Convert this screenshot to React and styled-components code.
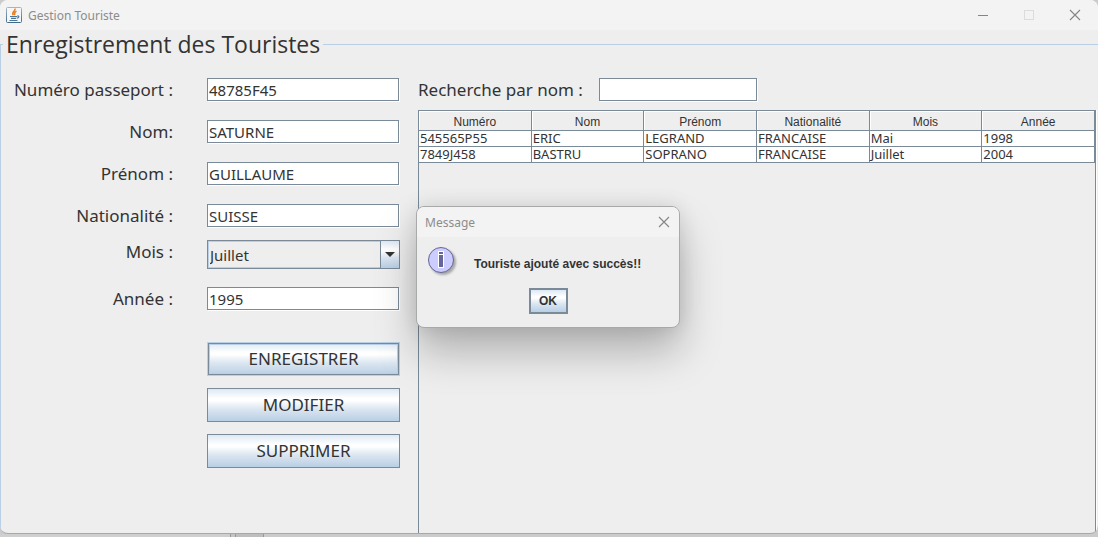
import React from "react";
import styled, { createGlobalStyle } from "styled-components";

const ui = '"Noto Sans", "Open Sans", sans-serif';
const metal = "linear-gradient(#dde8f3 0%, #ffffff 30%, #ffffff 36%, #dce6f1 62%, #b8cfe5 100%)";

const GlobalStyle = createGlobalStyle`
  * { box-sizing: border-box; }
  body { margin: 0; background: #cbcbcb; color: #333; font-family: ${ui}; }
  button, input, select { margin: 0; color: #333; font-family: inherit; border-radius: 0; }
`;

const Desktop = styled.div`
  position: relative;
  display: flex;
  flex-direction: column;
  min-height: 100vh;
`;

const Window = styled.main`
  flex: 1;
  display: flex;
  flex-direction: column;
  background: #eee;
  border-bottom: 1px solid #a6a8aa;
  border-radius: 8px;
  overflow: hidden;
`;

const TitleBar = styled.header`
  display: flex;
  align-items: center;
  height: 30px;
  padding-left: 6px;
  background: #f3f3f3;
  color: #8c8c8c;
  font-size: 12px;
`;

const Title = styled.span`
  flex: 1;
  padding-left: 6px;
`;

const CaptionButton = styled.button`
  display: flex;
  align-items: center;
  justify-content: center;
  width: ${(p) => p.$width || 46}px;
  height: 28px;
  padding: 0;
  border: 0;
  background: none;
`;

const Panel = styled.fieldset`
  flex: 1;
  min-width: 0;
  margin: 0;
  padding: 20px 2px 0 6px;
  border: 1px solid #b8cfe5;
  border-width: 1px 0 0 1px;
`;

const Legend = styled.legend`
  margin-left: -4px;
  padding: 0 3px;
  font-family: "Open Sans", "Noto Sans", sans-serif;
  font-size: 23px;
  line-height: 28px;
`;

const Columns = styled.div`
  display: flex;
  align-items: stretch;
  gap: 18px;
  min-height: calc(100vh - 82px);
`;

const Form = styled.form`
  display: flex;
  flex-direction: column;
  flex: none;
  width: 393px;
  gap: 18px;
`;

const Field = styled.div`
  display: grid;
  grid-template-columns: 166px 193px;
  column-gap: 34px;
  align-items: start;
`;

const Group = styled.div`
  display: flex;
  flex-direction: column;
  gap: 12px;
`;

const Label = styled.label`
  font-size: 17px;
  line-height: 24px;
  text-align: right;
  white-space: nowrap;
`;

const TextBox = styled.input`
  width: ${(p) => p.$width || "192px"};
  height: 23px;
  margin-bottom: 1px;
  padding: 0 1px;
  border: 1px solid #7a8a99;
  background: #fff;
  box-shadow: 1px 1px 0 #fff;
  font-size: 15px;
  outline: 0;
`;

const SelectFrame = styled.div`
  display: grid;
  grid-template-columns: 1fr 19px;
  height: 29px;
  border: 1px solid #7a8a99;
`;

const Select = styled.select`
  grid-area: 1 / 1 / 2 / 3;
  appearance: none;
  padding: 0 1px;
  border: 1px solid #b8cfe5;
  background: #eee;
  font-size: 15px;
  outline: 0;
`;

const SelectArrow = styled.span`
  grid-area: 1 / 2;
  display: flex;
  align-items: center;
  justify-content: center;
  border-left: 1px solid #7a8a99;
  background: ${metal};
  pointer-events: none;
`;

const Actions = styled.div`
  display: flex;
  flex-direction: column;
  gap: 12px;
  width: 193px;
  margin: 13px 0 0 200px;
`;

const ActionButton = styled.button`
  height: 34px;
  padding: 0;
  border: 1px solid ${(p) => (p.$focused ? "#b8cfe5" : "#7a8a99")};
  background: ${metal};
  box-shadow: ${(p) => (p.$focused ? "inset 0 0 0 1px #7a8a99, inset 0 0 0 2px #b8cfe5" : "none")};
  font-size: 17px;
  line-height: 24px;
`;

const Results = styled.section`
  flex: 1;
  display: flex;
  flex-direction: column;
  min-width: 0;
  gap: 8px;
`;

const Search = styled.div`
  display: flex;
  align-items: center;
  gap: 16px;
`;

const ScrollPane = styled.div`
  flex: 1;
  border: 1px solid #7a8a99;
  border-bottom: 0;
  box-shadow: 1px 0 0 #fff;
`;

const Table = styled.table`
  width: 100%;
  table-layout: fixed;
  border-collapse: separate;
  border-spacing: 0;
`;

const HeadCell = styled.th`
  height: 20px;
  padding: 2px 0 0;
  border-right: 1px solid #7a8a99;
  border-bottom: 1px solid #7a8a99;
  box-shadow: inset 1px 1px 0 #fff;
  font: 12px/16px "Liberation Sans", Arial, sans-serif;
`;

const Cell = styled.td`
  height: 16px;
  padding: 0 1px;
  border-right: 1px solid #7a8a99;
  border-bottom: 1px solid #7a8a99;
  background: #fff;
  font-size: 13px;
  line-height: 15px;
`;

const Overlay = styled.div`
  position: absolute;
  inset: 0 2px 3px 0;
  display: flex;
  align-items: center;
  justify-content: center;
`;

const Dialog = styled.div`
  width: 264px;
  border: 1px solid #a8aaaa;
  border-radius: 8px;
  background: #eee;
  box-shadow: 0 24px 42px rgba(0, 0, 0, 0.26), 0 0 20px rgba(0, 0, 0, 0.1);
  overflow: hidden;
`;

const DialogTitle = styled.div`
  display: flex;
  align-items: center;
  justify-content: space-between;
  height: 30px;
  padding-left: 8px;
  background: #f3f3f3;
  color: #8c8c8c;
  font-size: 12px;
`;

const DialogBody = styled.div`
  display: flex;
  gap: 15px;
  padding: 9px 10px 0;
`;

const DialogText = styled.p`
  margin: 0;
  padding-top: 10px;
  font: bold 12px/16px "Liberation Sans", Arial, sans-serif;
`;

const DialogActions = styled.div`
  display: flex;
  justify-content: center;
  padding: 10px 0 13px;
`;

const OkButton = styled.button`
  width: 39px;
  height: 26px;
  padding: 0;
  border: 2px solid #7a8a99;
  background: ${metal};
  && { font: bold 12px/16px "Liberation Sans", Arial, sans-serif; }
`;

const Taskbar = styled.div`
  display: flex;
  height: 3px;
`;

const TaskbarItem = styled.span`
  width: ${(p) => p.$width}px;
  border-right: 1px solid #999;
  background: ${(p) => p.$color};
`;

const JavaIcon = () => (
  <svg width="16" height="16" viewBox="0 0 16 16" aria-hidden="true">
    <defs>
      <linearGradient id="cup" x1="0" y1="0" x2="0" y2="1">
        <stop offset="0" stopColor="#a3b6c4" />
        <stop offset="1" stopColor="#41698a" />
      </linearGradient>
    </defs>
    <rect x="0.5" y="0.5" width="15" height="15" rx="1" fill="#f4f6f8" stroke="url(#cup)" />
    <path d="M9 1.5C10 4 5 5 7.2 8.2M10.5 4.2C8 5.5 8 6.5 8.8 8.2" fill="none" stroke="#ee7f22" strokeWidth="1.5" />
    <path d="M4 9.5h7M5 11.3h5M3.5 13.5h8M11 9h1.5c1 1-.3 2-1.8 2.2" fill="none" stroke="#4e7896" strokeWidth="1.2" />
  </svg>
);

const CloseIcon = () => (
  <svg width="12" height="12" viewBox="0 0 12 12" aria-hidden="true">
    <path d="M1 1l10 10M11 1L1 11" stroke="#858585" strokeWidth="1.1" />
  </svg>
);

const InfoIcon = () => (
  <svg width="32" height="32" viewBox="0 0 32 32" aria-hidden="true">
    <defs>
      <filter id="soft" x="-20%" y="-20%" width="140%" height="140%">
        <feGaussianBlur stdDeviation="1.2" />
      </filter>
    </defs>
    <circle cx="16" cy="16" r="13" fill="#888" opacity="0.7" filter="url(#soft)" />
    <circle cx="14" cy="14" r="12.5" fill="#ccf" stroke="#669" />
    <path d="M11 5h6v17h-6z" fill="#fff" />
    <path d="M12 6h4v2h-4zM12 9h4v12h-4z" fill="#669" />
  </svg>
);

const people = [
  ["545565P55", "ERIC", "LEGRAND", "FRANCAISE", "Mai", "1998"],
  ["7849J458", "BASTRU", "SOPRANO", "FRANCAISE", "Juillet", "2004"],
];
const headings = ["Numéro", "Nom", "Prénom", "Nationalité", "Mois", "Année"];

const TextField = ({ id, label, value }) => (
  <Field>
    <Label htmlFor={id}>{label}</Label>
    <TextBox id={id} type="text" defaultValue={value} />
  </Field>
);

export default function App() {
  return (
    <Desktop>
      <GlobalStyle />
      <Window>
        <TitleBar>
          <JavaIcon />
          <Title>Gestion Touriste</Title>
          <CaptionButton type="button" aria-label="Réduire">
            <svg width="10" height="10" aria-hidden="true"><path d="M0 5.5h10" stroke="#858585" /></svg>
          </CaptionButton>
          <CaptionButton type="button" aria-label="Agrandir" disabled>
            <svg width="10" height="10" aria-hidden="true"><rect x="0.5" y="0.5" width="9" height="9" fill="none" stroke="#dcdcdc" /></svg>
          </CaptionButton>
          <CaptionButton type="button" aria-label="Fermer"><CloseIcon /></CaptionButton>
        </TitleBar>
        <Panel>
          <Legend>Enregistrement des Touristes</Legend>
          <Columns>
            <Form onSubmit={(e) => e.preventDefault()}>
              <TextField id="passport" label="Numéro passeport :" value="48785F45" />
              <TextField id="lastname" label="Nom:" value="SATURNE" />
              <TextField id="firstname" label="Prénom :" value="GUILLAUME" />
              <Group>
                <TextField id="nationality" label="Nationalité :" value="SUISSE" />
                <Field>
                  <Label htmlFor="month">Mois :</Label>
                  <SelectFrame>
                    <Select id="month" defaultValue="Juillet">
                      <option>Mai</option>
                      <option>Juillet</option>
                    </Select>
                    <SelectArrow>
                      <svg width="10" height="5" aria-hidden="true"><path d="M0 0h10L5 5z" fill="#333" /></svg>
                    </SelectArrow>
                  </SelectFrame>
                </Field>
              </Group>
              <TextField id="year" label="Année :" value="1995" />
              <Actions>
                <ActionButton type="submit" $focused>ENREGISTRER</ActionButton>
                <ActionButton type="button">MODIFIER</ActionButton>
                <ActionButton type="button">SUPPRIMER</ActionButton>
              </Actions>
            </Form>
            <Results>
              <Search>
                <Label htmlFor="search">Recherche par nom :</Label>
                <TextBox id="search" type="text" $width="158px" />
              </Search>
              <ScrollPane>
                <Table>
                  <thead>
                    <tr>{headings.map((h) => <HeadCell key={h} scope="col">{h}</HeadCell>)}</tr>
                  </thead>
                  <tbody>
                    {people.map((row) => (
                      <tr key={row[0]}>{row.map((c, i) => <Cell key={i}>{c}</Cell>)}</tr>
                    ))}
                  </tbody>
                </Table>
              </ScrollPane>
            </Results>
          </Columns>
        </Panel>
      </Window>
      <Taskbar>
        <TaskbarItem $width={231} $color="#cfcfcf" />
        <TaskbarItem $width={5} $color="#c4c4c4" />
        <TaskbarItem $width={28} $color="#bebebe" />
      </Taskbar>
      <Overlay>
        <Dialog role="dialog" aria-labelledby="message-title">
          <DialogTitle>
            <span id="message-title">Message</span>
            <CaptionButton type="button" aria-label="Fermer le message" $width={30}><CloseIcon /></CaptionButton>
          </DialogTitle>
          <DialogBody>
            <InfoIcon />
            <DialogText>Touriste ajouté avec succès!!</DialogText>
          </DialogBody>
          <DialogActions><OkButton type="button">OK</OkButton></DialogActions>
        </Dialog>
      </Overlay>
    </Desktop>
  );
}
